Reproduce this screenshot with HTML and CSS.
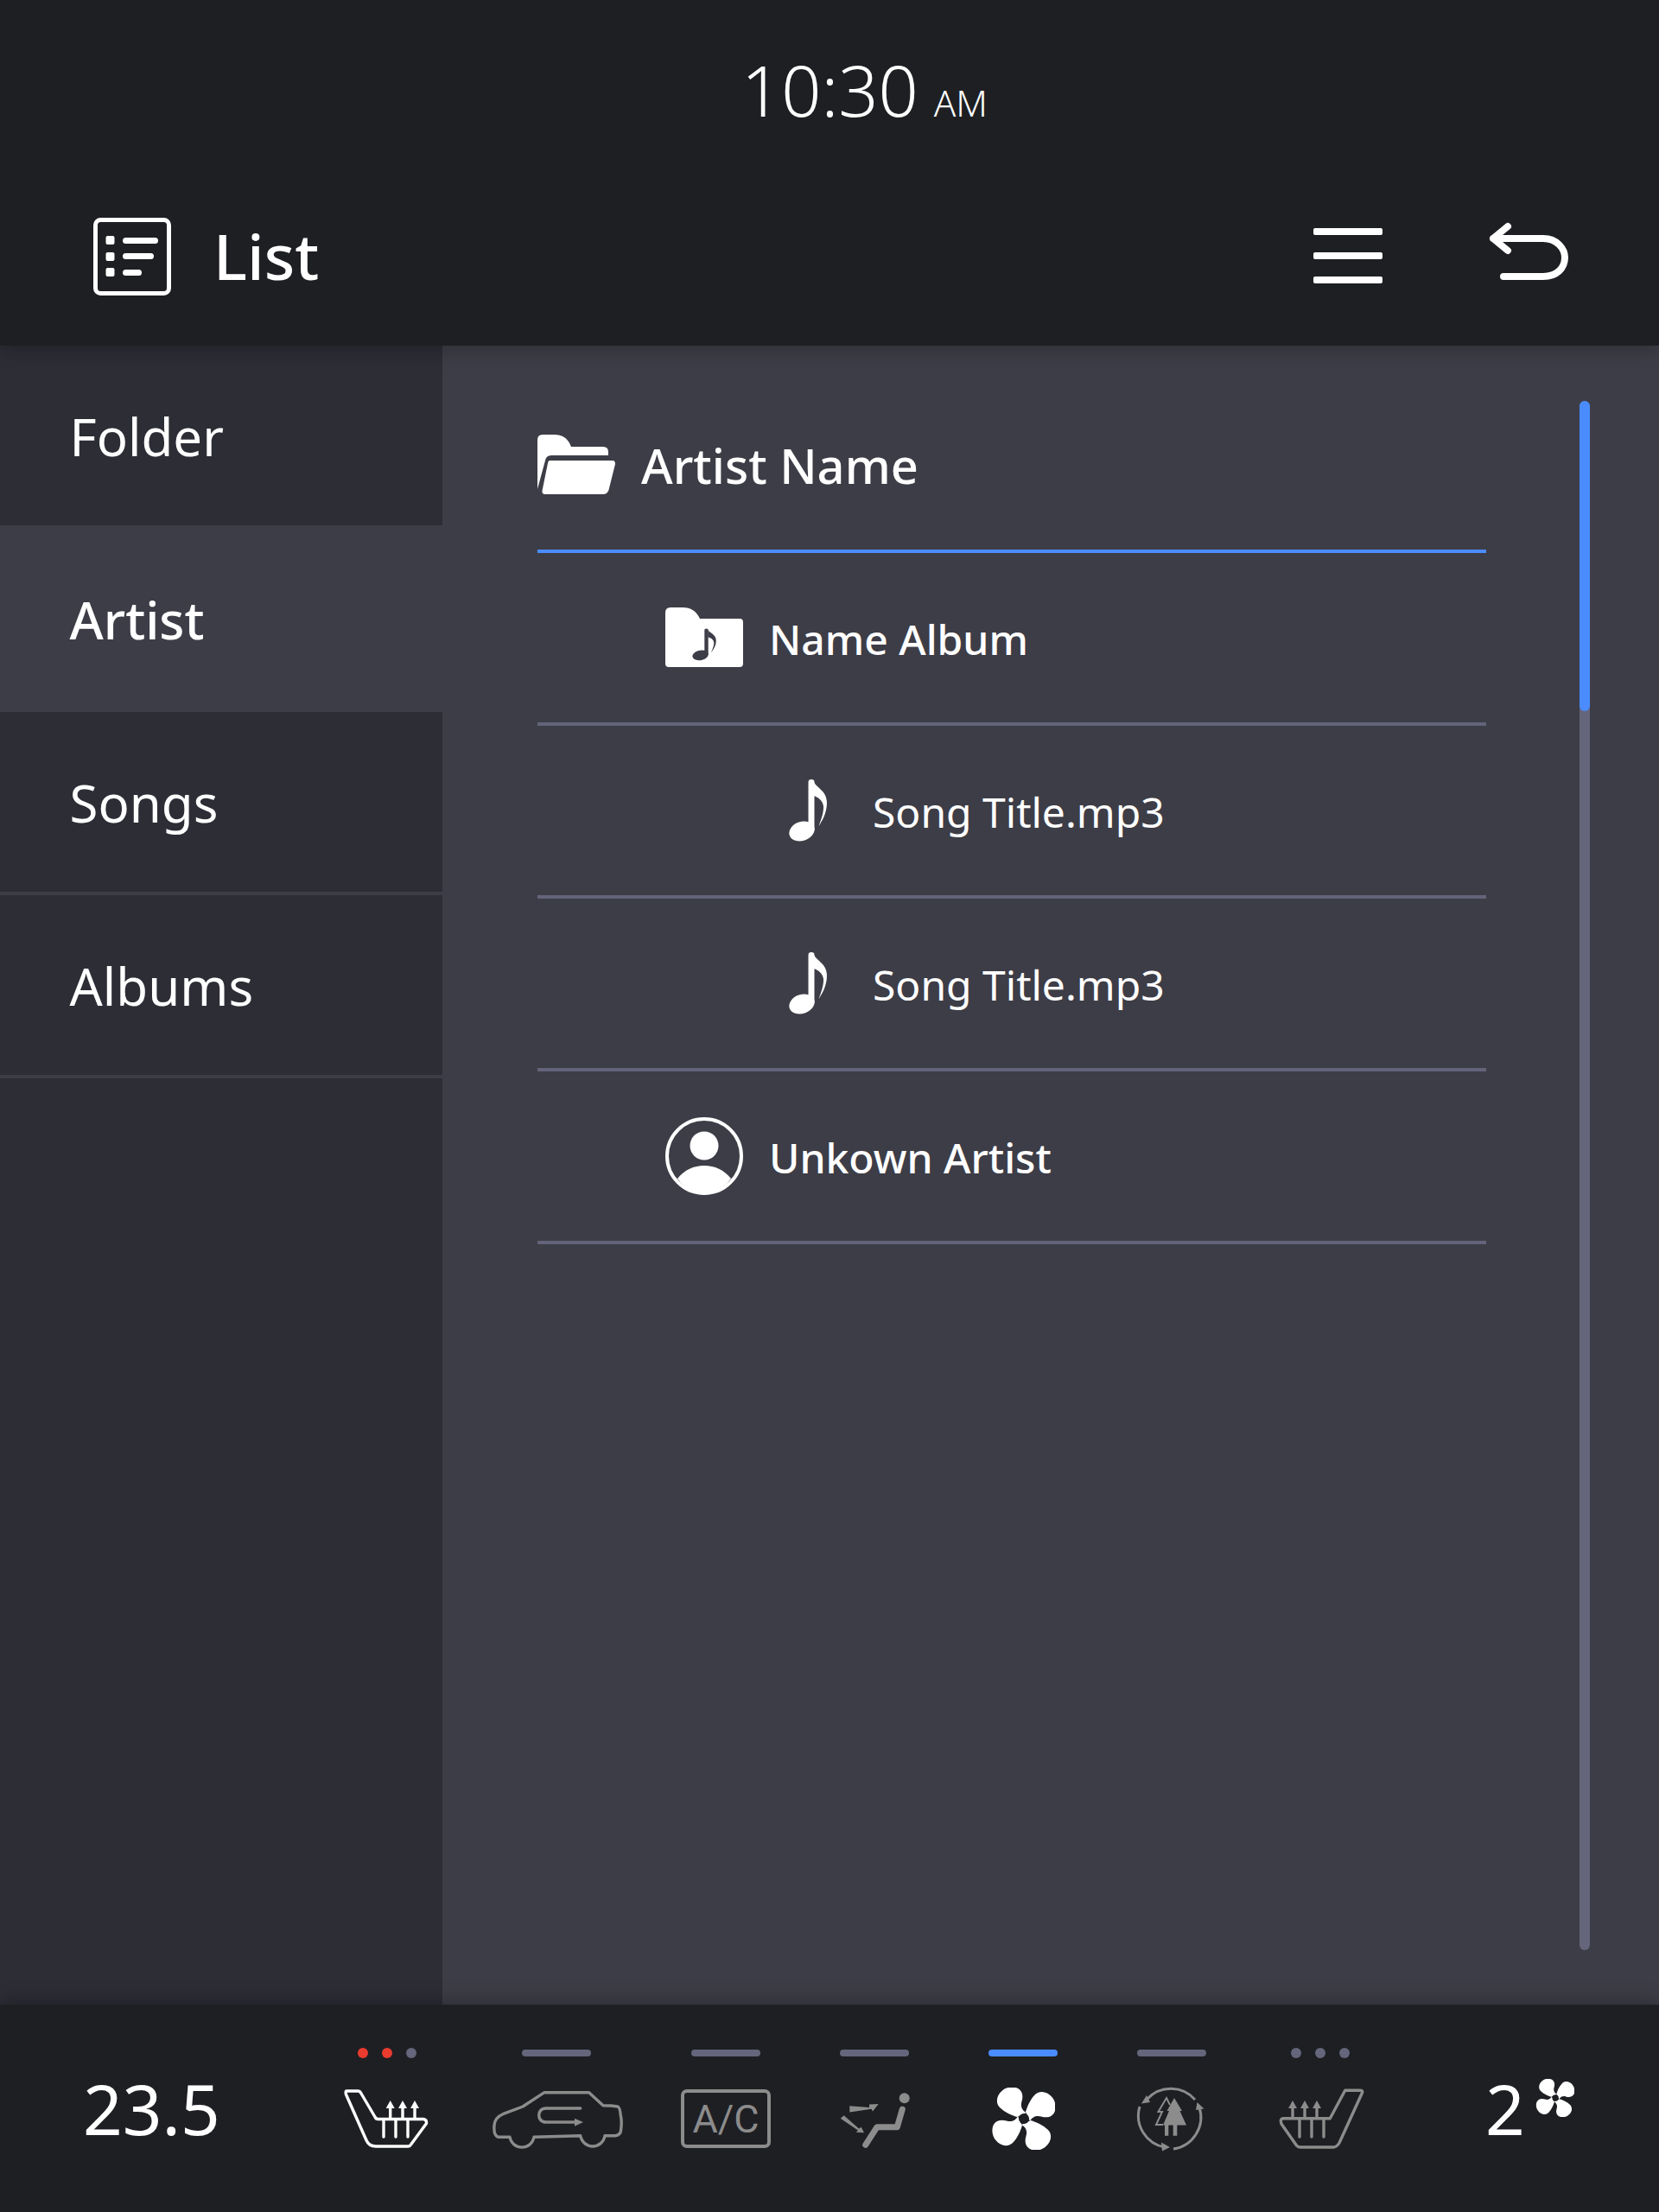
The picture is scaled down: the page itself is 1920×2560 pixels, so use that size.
FILE: index.html
```html
<!DOCTYPE html>
<html lang="en">
<head>
  <meta charset="UTF-8">
  <meta name="viewport" content="width=device-width, initial-scale=1">
  <title>List</title>
  <link rel="stylesheet" href="styles.css">
</head>
<body>
  <!-- shared icons -->
  <svg class="sprite" xmlns="http://www.w3.org/2000/svg">
    <symbol id="note" viewBox="0 0 48 78" preserveAspectRatio="none">
      <ellipse cx="17" cy="63" rx="15" ry="11" transform="rotate(-18 17 63)"/>
      <path d="M24.5 6Q24.5 3 28 3T31.5 6V62H24.5Z"/>
      <path d="M31 6C34 13 46 16 46 30C46 42 40 52 36.5 57C40 48 42.5 40 42 34C41 27 36 24 31 22Z"/>
    </symbol>
    <symbol id="fan" viewBox="-38 -36 74 72">
      <g fill="#fff">
        <path id="blade" d="M3-7L-8-2C-14-4-22-7-28-13C-33-18-32-27-25-32.500C-20-37-11-38-6-34.500C-1-31-1-25-2.500-20C-4-15-3-10 3-7Z"/>
        <use href="#blade" transform="rotate(90)"/>
        <use href="#blade" transform="rotate(180)"/>
        <use href="#blade" transform="rotate(270)"/>
      </g>
      <circle r="6" fill="#1e1f23"/>
    </symbol>
  </svg>

  <div class="screen">
    <header class="top">
      <div class="clock"><span class="clock-time">10:30</span><span class="clock-ampm">AM</span></div>
      <div class="title-row">
        <svg class="icon-title" width="90" height="90" viewBox="0 0 90 90">
          <rect x="2.5" y="2.5" width="85" height="85" rx="6" fill="none" stroke="#fff" stroke-width="5"/>
          <g fill="#fff">
            <rect x="14.5" y="21" width="10" height="10" rx="2"/>
            <rect x="14.5" y="40" width="10" height="10" rx="2"/>
            <rect x="14.5" y="58" width="10" height="10" rx="2"/>
            <rect x="34" y="23" width="41" height="7" rx="3.5"/>
            <rect x="34" y="41" width="36" height="7" rx="3.5"/>
            <rect x="34" y="60" width="22" height="7" rx="3.5"/>
          </g>
        </svg>
        <h1 class="title">List</h1>
        <svg class="icon-menu" width="80" height="64" viewBox="0 0 80 64">
          <g fill="#fff">
            <rect y="0" width="80" height="8" rx="2"/>
            <rect y="28" width="80" height="8" rx="2"/>
            <rect y="56" width="80" height="8" rx="2"/>
          </g>
        </svg>
        <svg class="icon-back" width="100" height="72" viewBox="0 0 100 72">
          <path d="M25 6L8 20L25 34M8 20H66C82 20 91 32 91 42C91 54 82 64 66 64H20" fill="none" stroke="#fff" stroke-width="8" stroke-linecap="round" stroke-linejoin="round"/>
        </svg>
      </div>
    </header>

    <div class="middle">
      <nav class="side">
        <div class="side-item">Folder</div>
        <div class="side-item side-active">Artist</div>
        <div class="side-item side-line">Songs</div>
        <div class="side-item side-line">Albums</div>
      </nav>

      <main class="panel">
        <div class="list">
          <div class="row row-head">
            <svg width="90" height="70" viewBox="22 62 90 70">
              <path fill="#fff" d="M22 68Q22 62 28 62H42Q56 62 61 76H98Q104 76 104 82V86H38Q32 86 31 92L22 125Z"/>
              <path fill="#fff" d="M36 92H109Q112 92 112 96L104.5 126Q103 131 98 131H31Q27 131 27.5 127L34 95Q34.5 92 36 92Z"/>
            </svg>
            <span class="row-name">Artist Name</span>
          </div>
          <div class="row row-sub">
            <svg width="90" height="70" viewBox="170 264 90 70">
              <path fill="#fff" d="M170 270Q170 264 176 264H190Q204 264 210 277H256Q260 277 260 281V329Q260 333 256 333H174Q170 333 170 329Z"/>
              <use href="#note" x="200" y="287" width="30" height="40" fill="#3d3d47"/>
            </svg>
            <span class="row-label row-strong">Name Album</span>
          </div>
          <div class="row row-song">
            <span class="note-box"><svg width="48" height="78" fill="#fff"><use href="#note"/></svg></span>
            <span class="row-label">Song Title.mp3</span>
          </div>
          <div class="row row-song">
            <span class="note-box"><svg width="48" height="78" fill="#fff"><use href="#note"/></svg></span>
            <span class="row-label">Song Title.mp3</span>
          </div>
          <div class="row row-sub">
            <svg width="90" height="90" viewBox="0 0 90 90">
              <circle cx="45" cy="45" r="43" fill="none" stroke="#fff" stroke-width="4"/>
              <circle cx="45" cy="33" r="16.5" fill="#fff"/>
              <path fill="#fff" d="M14 71C22 61 33 56 45 56C57 56 68 61 76 71A38 38 0 0 1 14 71Z"/>
            </svg>
            <span class="row-label row-strong">Unkown Artist</span>
          </div>
        </div>
        <div class="scroll"><div class="scroll-thumb"></div></div>
      </main>
    </div>

    <footer class="bottom">
      <div class="temp">23.5</div>

      <div class="clim">
        <div class="clim-mark"><i class="dot dot-red"></i><i class="dot dot-red"></i><i class="dot"></i></div>
        <div class="clim-icon">
          <svg width="102" height="70" viewBox="7 12 102 70" fill="none" stroke="#fff" stroke-width="3.4" stroke-linejoin="round" stroke-linecap="round">
            <path d="M11 15H24Q26.500 15 27.500 17L44 45Q45 47.500 47.500 47.500H100Q104 48 103.500 52.500L85.500 77Q84.500 79 82.500 79H45Q37 79 34 72L10.500 19Q9.500 15 11 15Z"/>
            <path d="M61.700 47V32M76 47V32M90 47V32M54 48V68M68 48V68M82 48V68"/>
            <path fill="#fff" stroke="none" d="M61.700 26L66.700 35H56.700ZM76 26L81 35H71ZM90 26L95 35H85Z"/>
          </svg>
        </div>
      </div>

      <div class="clim clim-wide">
        <div class="clim-mark"><i class="bar"></i></div>
        <div class="clim-icon">
          <svg width="154" height="70" viewBox="177 12 154 70" fill="none" stroke="#8c8c8c" stroke-width="3.4" stroke-linejoin="round" stroke-linecap="round">
            <path d="M200 68.300C203 84 225 84 228 68.300L281.700 66.700C285 83 307 83 310 66.700H321.700Q328 66 328.500 61Q330 50 328.300 43Q327.500 34 325 33Q318 31.700 308 31.700L291.700 16.700H240L215 33L192 41.700Q182 46 182 55Q181 67 187 68.300Z"/>
            <path d="M281.700 35H241.700C231 35 231 51 241.700 51H276"/>
            <path fill="#8c8c8c" stroke="none" d="M275 46.700L285 51L275 55.700Z"/>
          </svg>
        </div>
      </div>

      <div class="clim">
        <div class="clim-mark"><i class="bar"></i></div>
        <div class="clim-icon"><div class="ac-badge">A/C</div></div>
      </div>

      <div class="clim">
        <div class="clim-mark"><i class="bar"></i></div>
        <div class="clim-icon">
          <svg width="86" height="70" viewBox="9 12 86 70" fill="#8c8c8c">
            <circle cx="86.700" cy="23.300" r="6"/>
            <path d="M84.300 36L78.300 56.700H55L41.700 77.300" fill="none" stroke="#8c8c8c" stroke-width="7" stroke-linecap="round" stroke-linejoin="round"/>
            <path d="M23.300 32.300L46 34L46 30.500L56.700 30L50 38.500L48.500 35.700L23.300 39.500Z"/>
            <path d="M12.700 46.700L16.700 43.300L34 58.500L36.700 56.700L40 63.300L30.700 62.700L33 60.500Z"/>
          </svg>
        </div>
      </div>

      <div class="clim">
        <div class="clim-mark"><i class="bar bar-on"></i></div>
        <div class="clim-icon"><svg width="74" height="72"><use href="#fan"/></svg></div>
      </div>

      <div class="clim">
        <div class="clim-mark"><i class="bar"></i></div>
        <div class="clim-icon">
          <svg width="86" height="80" viewBox="13 7 86 80" fill="#8c8c8c">
            <g fill="none" stroke="#8c8c8c" stroke-width="3">
              <path d="M83 25A37 37 0 0 0 28 24"/>
              <path d="M88 34A37 37 0 0 1 58 82"/>
              <path d="M48 80A37 37 0 0 1 19 33"/>
              <path d="M54 31L50 23L40.500 39H45L38 54H46" stroke-width="2"/>
            </g>
            <path d="M21 29.500L27 20L31 28Z"/>
            <path d="M85.500 28L93.500 35.500L84 37Z"/>
            <path d="M54 80L44 74.500L45 84.500Z"/>
            <path d="M59 23L68 38H65.500L73 54.500H62.300V66.700H57.700V54.500H52.300V66.700H48V54.500H46L53 38H50.500Z"/>
          </svg>
        </div>
      </div>

      <div class="clim">
        <div class="clim-mark"><i class="dot"></i><i class="dot"></i><i class="dot"></i></div>
        <div class="clim-icon">
          <svg width="102" height="70" viewBox="77 117 102 70" fill="none" stroke="#8c8c8c" stroke-width="3.4" stroke-linejoin="round" stroke-linecap="round">
            <path d="M156.700 119.300H174Q177.500 119.300 176.500 122L150 180Q147 185 143 185H105Q102 185 100.500 183L83 158Q81 152 85 151.700H139.300Z"/>
            <path d="M96 151V137M110 151V137M124 151V137M104 152V173M118 152V173M132 152V173"/>
            <path fill="#8c8c8c" stroke="none" d="M96 131L101 140H91ZM110 131L115 140H105ZM124 131L129 140H119Z"/>
          </svg>
        </div>
      </div>

      <div class="speed">
        <span class="speed-num">2</span>
        <svg class="speed-fan" width="45" height="44"><use href="#fan"/></svg>
      </div>
    </footer>
  </div>
</body>
</html>
```

FILE: styles.css
```css
html, body {
  margin: 0;
  padding: 0;
}
body {
  font-family: "Noto Sans", "Open Sans", sans-serif;
  color: #fff;
  background-color: #1e1f23;
}
.sprite {
  display: none;
}
.screen {
  width: 1920px;
  height: 2560px;
  display: flex;
  flex-direction: column;
}

/* top bar */
.top {
  height: 400px;
  flex: none;
  background-color: #1e1f23;
  box-shadow: 0 4px 20px rgba(0,0,0,0.25);
  position: relative;
  z-index: 1;
}
.clock {
  display: flex;
  align-items: baseline;
  padding: 64px 0 0 858px;
  height: 80px;
  line-height: 80px;
  font-weight: 350;
}
.clock-time {
  font-size: 81px;
}
.clock-ampm {
  font-size: 42px;
  margin-left: 18px;
}
.title-row {
  display: flex;
  align-items: center;
  height: 90px;
  margin-top: 108px;
  padding-left: 108px;
}
.icon-title {
  flex: none;
}
.title {
  margin: -3px 0 0 49px;
  font-size: 73px;
  font-weight: 500;
  line-height: 90px;
  flex: 1;
}
.icon-menu {
  flex: none;
  margin-top: -2px;
}
.icon-back {
  flex: none;
  margin: -10px 100px 0 120px;
}

/* middle */
.middle {
  flex: 1;
  display: flex;
  min-height: 0;
}
.side {
  width: 512px;
  flex: none;
  background-color: #2c2d35;
}
.side-item {
  display: flex;
  align-items: center;
  box-sizing: border-box;
  height: 212px;
  padding: 2px 0 0 80.5px;
  font-size: 60px;
  line-height: 80px;
}
.side-item:first-child {
  height: 208px;
  padding-top: 2px;
}
.side-active {
  height: 216px;
  font-weight: 500;
  background-color: #3d3d47;
}
.side-line {
  border-bottom: 4px solid #3d3d47;
}
.panel {
  flex: 1;
  display: flex;
  align-items: flex-start;
  background-color: #3d3d47;
}
.list {
  width: 1098px;
  margin: 40px 0 0 110px;
}
.row {
  display: flex;
  align-items: center;
  height: 196px;
  border-bottom: 4px solid #63637a;
}
.row-head {
  border-bottom-color: #4a8cff;
}
.row-sub {
  padding-left: 148px;
}
.row-song {
  padding-left: 268px;
}
.row-name {
  font-size: 56px;
  font-weight: 500;
  margin-left: 30px;
}
.row-label {
  font-size: 48px;
  margin: 2px 0 0 30px;
}
.row-strong {
  font-weight: 500;
}
.note-box {
  width: 90px;
  display: flex;
  justify-content: center;
}
.scroll {
  width: 12px;
  height: 1793px;
  margin: 64px 0 0 108px;
  border-radius: 6px;
  background-color: #65657b;
}
.scroll-thumb {
  height: 359px;
  border-radius: 6px;
  background-color: #4a8cff;
}

/* climate bar */
.bottom {
  height: 240px;
  flex: none;
  display: flex;
  background-color: #1e1f23;
  box-shadow: 0 -4px 20px rgba(0,0,0,0.25);
  position: relative;
  z-index: 1;
}
.temp {
  width: 266px;
  padding-left: 96px;
  align-self: center;
  font-size: 80px;
  line-height: 80px;
}
.clim {
  width: 172px;
  padding-top: 50px;
}
.clim-wide {
  width: 220px;
}
.clim-mark {
  height: 12px;
  display: flex;
  justify-content: center;
  align-items: center;
  gap: 16px;
}
.clim-icon {
  height: 80px;
  margin-top: 30px;
  display: flex;
  justify-content: center;
  align-items: center;
}
.dot {
  width: 12px;
  height: 12px;
  border-radius: 50%;
  background-color: #65657b;
}
.dot-red {
  background-color: #ea3b2f;
}
.bar {
  width: 80px;
  height: 8px;
  border-radius: 4px;
  background-color: #65657b;
}
.bar-on {
  background-color: #4a8cff;
}
.ac-badge {
  width: 104px;
  height: 68px;
  box-sizing: border-box;
  border: 4px solid #8c8c8c;
  border-radius: 7px;
  display: flex;
  justify-content: center;
  align-items: center;
  font-family: Roboto, "Noto Sans", sans-serif;
  font-size: 45px;
  font-weight: 450;
  color: #8c8c8c;
}
.speed {
  display: flex;
  align-items: flex-start;
  align-self: center;
  height: 80px;
  margin-left: 105px;
}
.speed-num {
  font-size: 80px;
  line-height: 80px;
}
.speed-fan {
  margin: 6px 0 0 12px;
}
```
